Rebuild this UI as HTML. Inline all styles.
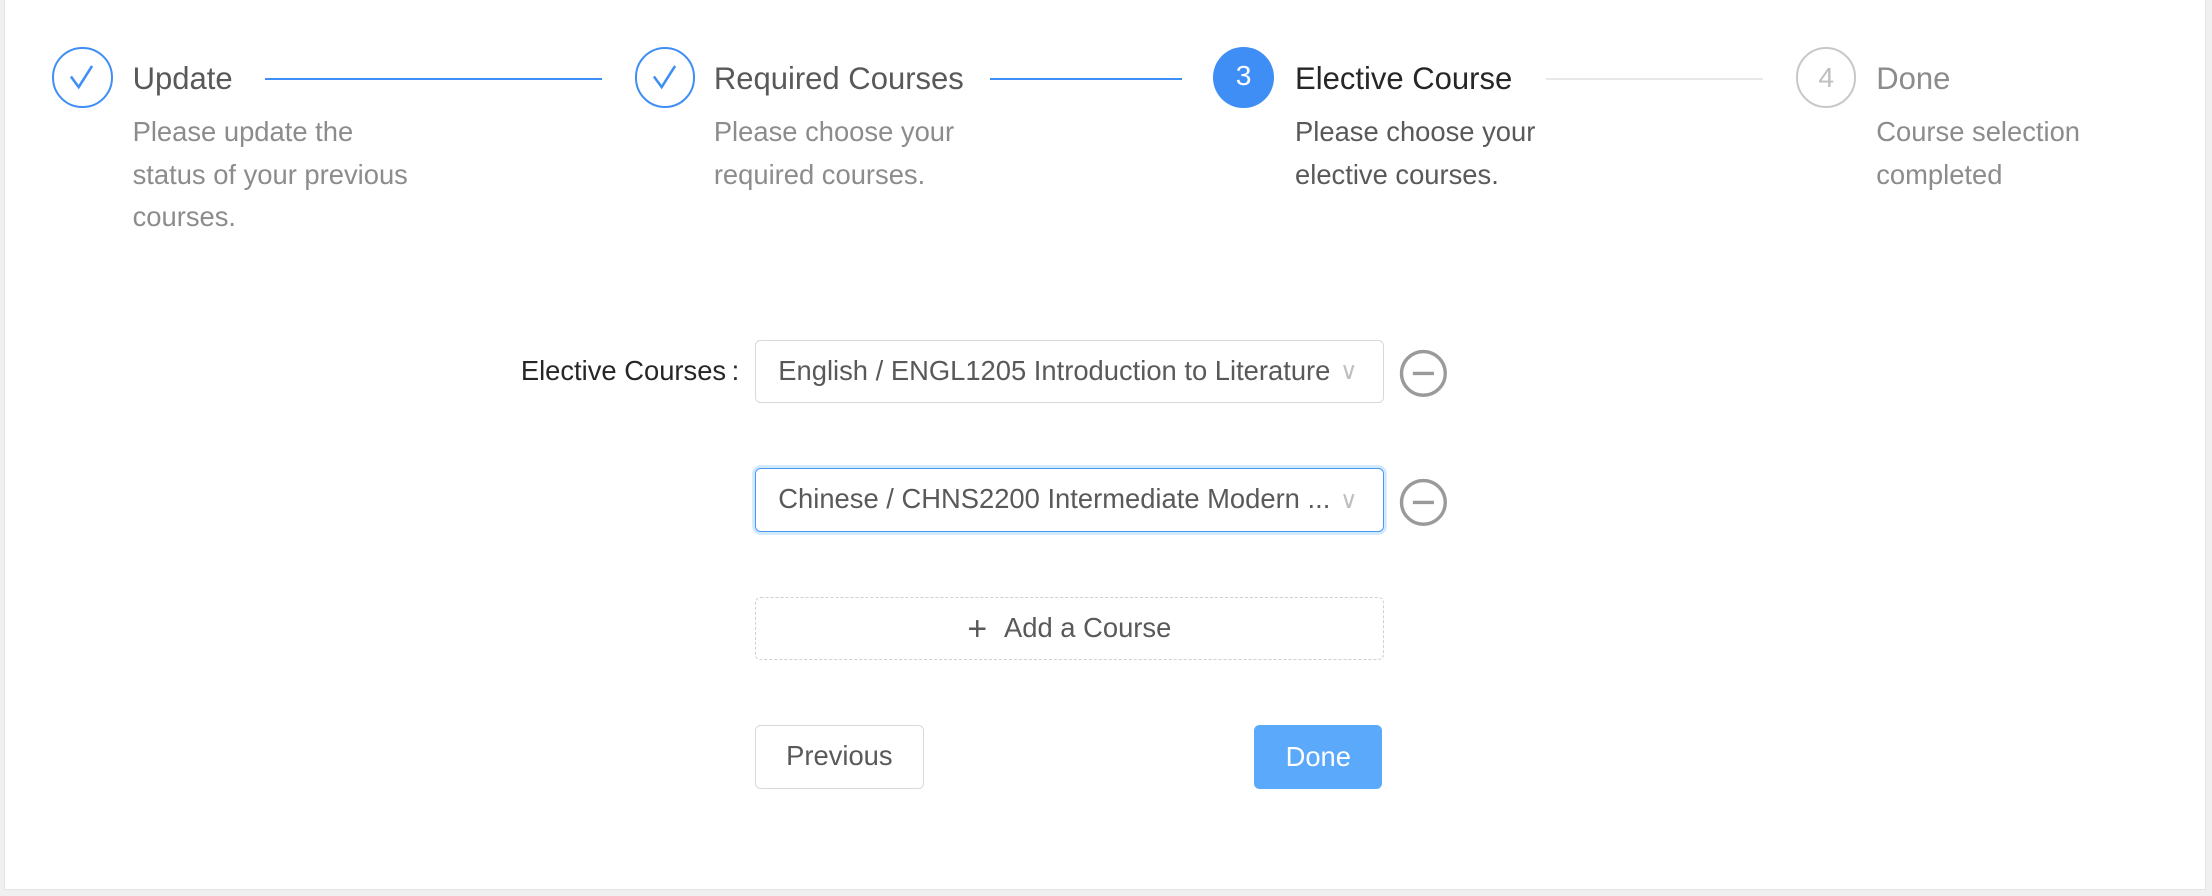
<!DOCTYPE html>
<html><head><meta charset="utf-8"><style>
html,body{margin:0;padding:0;background:#f0f0f0;width:2212px;height:896px;overflow:hidden}
#z{zoom:1.41071;width:1568px;height:635px;position:relative;font-family:"Liberation Sans",Arial,sans-serif}
.card{position:absolute;left:3px;top:-10px;width:1561px;height:641px;background:#fff;border:1px solid #e4e4e4;box-sizing:border-box}
.abs{position:absolute}
.circ{position:absolute;width:43px;height:43px;border-radius:50%;box-sizing:border-box;top:33.5px;text-align:center;line-height:41px;font-size:20px}
.t{position:absolute;top:43px;font-size:22px;line-height:26px;white-space:nowrap}
.d{position:absolute;top:79px;font-size:19.4px;line-height:30px;color:#8c8c8c;white-space:nowrap}
.ln{position:absolute;top:55px;height:1.5px}
.sel{position:absolute;left:535px;width:446px;height:45px;border:1px solid #d9d9d9;border-radius:4px;box-sizing:border-box;font-size:19.4px;color:#595959;line-height:43px;padding-left:16px;white-space:nowrap}
.arr{position:absolute;right:18px;top:1px;color:#bfbfbf;font-size:17px}
.btn{position:absolute;height:45px;border-radius:4px;box-sizing:border-box;font-size:19.4px;text-align:center;line-height:43px}
</style></head><body><div id="z">
<div class="card"></div>

<div class="circ" style="left:37px;border:1.5px solid #3f8ef5"><svg width="40" height="40" viewBox="0 0 40 40"><path d="M12 19.5 L17.5 27 L27 12" fill="none" stroke="#3f8ef5" stroke-width="1.8"/></svg></div>
<div class="t" style="left:94px;color:#595959">Update</div>
<div class="d" style="left:94px">Please update the<br>status of your previous<br>courses.</div>
<div class="ln" style="left:188px;width:239px;background:#3f8ef5"></div>

<div class="circ" style="left:450px;border:1.5px solid #3f8ef5"><svg width="40" height="40" viewBox="0 0 40 40"><path d="M12 19.5 L17.5 27 L27 12" fill="none" stroke="#3f8ef5" stroke-width="1.8"/></svg></div>
<div class="t" style="left:506px;color:#595959">Required Courses</div>
<div class="d" style="left:506px">Please choose your<br>required courses.</div>
<div class="ln" style="left:702px;width:136px;background:#3f8ef5"></div>

<div class="circ" style="left:860px;background:#3f8ef5;color:#fff">3</div>
<div class="t" style="left:918px;color:#262626">Elective Course</div>
<div class="d" style="left:918px;color:#595959">Please choose your<br>elective courses.</div>
<div class="ln" style="left:1096px;width:154px;background:#e8e8e8"></div>

<div class="circ" style="left:1273px;border:1.5px solid #c8c8c8;color:#bfbfbf">4</div>
<div class="t" style="left:1330px;color:#8c8c8c">Done</div>
<div class="d" style="left:1330px">Course selection<br>completed</div>

<div class="abs" style="left:300px;width:224px;text-align:right;top:252px;font-size:19.4px;color:#262626;white-space:nowrap">Elective Courses&thinsp;:</div>
<div class="sel" style="top:241px">English / ENGL1205 Introduction to Literature<span class="arr">&#8744;</span></div>
<div class="sel" style="top:332px;border-color:#4a96f7;box-shadow:0 0 0 2px rgba(24,144,255,0.2)">Chinese / CHNS2200 Intermediate Modern ...<span class="arr">&#8744;</span></div>
<svg class="abs" style="left:991px;top:247px" width="36" height="36" viewBox="0 0 36 36"><circle cx="18" cy="18" r="15.5" fill="none" stroke="#9a9a9a" stroke-width="2.4"/><path d="M10.5 18H25.5" stroke="#9a9a9a" stroke-width="2.4"/></svg>
<svg class="abs" style="left:991px;top:338px" width="36" height="36" viewBox="0 0 36 36"><circle cx="18" cy="18" r="15.5" fill="none" stroke="#9a9a9a" stroke-width="2.4"/><path d="M10.5 18H25.5" stroke="#9a9a9a" stroke-width="2.4"/></svg>

<div class="btn" style="left:535px;top:423px;width:446px;border:1px dashed #d0d0d0;color:#595959"><span style="font-size:24px;vertical-align:-2px;margin-right:12px">+</span>Add a Course</div>
<div class="btn" style="left:535px;top:514px;width:120px;border:1px solid #d9d9d9;color:#595959">Previous</div>
<div class="btn" style="left:889px;top:514px;width:91px;background:#5aa9fa;color:#fff;line-height:45px">Done</div>
</div></body></html>
